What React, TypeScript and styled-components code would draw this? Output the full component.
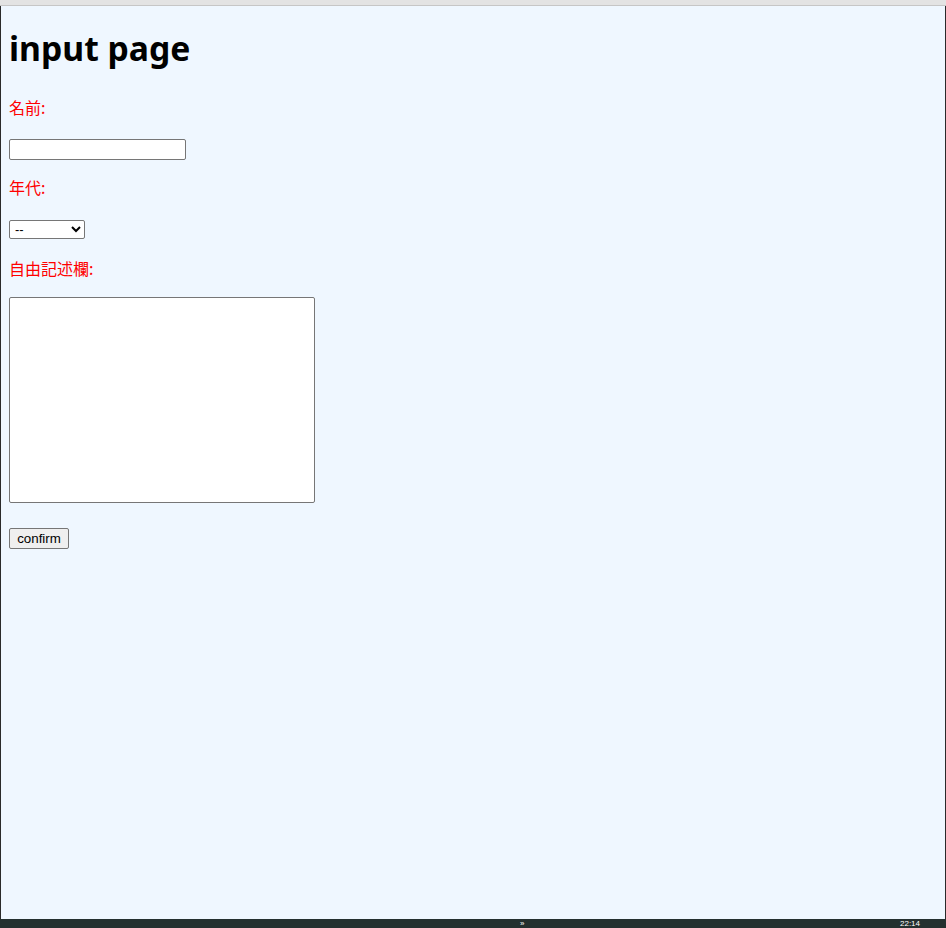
import styled, { createGlobalStyle } from "styled-components"

const GlobalStyle = createGlobalStyle`
  html, body {
    margin: 0;
    padding: 0;
    background: #263235;
  }
  #root {
    width: 946px;
    height: 928px;
  }
`

const Screen = styled.div`
  width: 946px;
  height: 928px;
  display: flex;
  flex-direction: column;
  overflow: hidden;
`

const TopBar = styled.div`
  height: 5px;
  background: #e3e3e3;
  border-bottom: 1px solid #c6c6c6;
  flex-shrink: 0;
`

const Window = styled.div`
  flex: 1;
  background: #eff7ff;
  border-left: 1px solid #2a2a2a;
  border-right: 1px solid #2a2a2a;
  padding: 0 8px;
  display: flex;
  flex-direction: column;
  align-items: flex-start;
`

const Title = styled.h1`
  margin: 22px 0 0;
  height: 40px;
  line-height: 40px;
  font-family: "Noto Sans", "Noto Sans CJK JP", sans-serif;
  font-size: 33.7px;
  font-weight: 700;
  color: #000;
`

const Label = styled.p<{ $top: number }>`
  margin: ${(p) => p.$top}px 0 0;
  height: 20px;
  line-height: 20px;
  font-family: "Noto Sans CJK JP", sans-serif;
  font-size: 16px;
  color: #ff0000;
`

const TextInput = styled.input`
  margin-top: 22px;
  box-sizing: border-box;
  width: 177px;
  height: 21px;
  border: 1px solid #767676;
  border-radius: 2px;
  background: #fff;
  padding: 1px 2px;
`

const Select = styled.select`
  margin-top: 23px;
  box-sizing: border-box;
  width: 76px;
  height: 19px;
  border: 1px solid #767676;
  border-radius: 2px;
  background: #fff;
  font-family: "Liberation Sans", Arial, sans-serif;
  font-size: 13px;
  padding: 0 1px;
  color: #000;
`

const TextArea = styled.textarea`
  margin-top: 19px;
  box-sizing: border-box;
  width: 306px;
  height: 206px;
  border: 1px solid #767676;
  border-radius: 2px;
  background: #fff;
  resize: none;
`

const Button = styled.button`
  margin-top: 25px;
  box-sizing: border-box;
  width: 60px;
  height: 21px;
  padding: 0;
  border: 1px solid #767676;
  border-radius: 2px;
  background: #efefef;
  font-family: "Liberation Sans", Arial, sans-serif;
  font-size: 13.33px;
  color: #000;
`

const Taskbar = styled.div`
  height: 9px;
  flex-shrink: 0;
  background: #24302f;
  position: relative;
  font-family: "Liberation Sans", Arial, sans-serif;
  font-size: 8px;
  color: #fff;
`

const TaskbarGlyph = styled.span<{ $left: number }>`
  position: absolute;
  left: ${(p) => p.$left}px;
  top: 0;
  line-height: 9px;
`

export default function App() {
  return (
    <>
      <GlobalStyle />
      <Screen>
        <TopBar />
        <Window>
          <Title>input page</Title>
          <Label $top={29}>名前:</Label>
          <TextInput type="text" />
          <Label $top={17}>年代:</Label>
          <Select defaultValue="">
            <option value="">--</option>
            <option value="10">10代</option>
            <option value="20">20代</option>
            <option value="30">30代</option>
          </Select>
          <Label $top={19}>自由記述欄:</Label>
          <TextArea />
          <Button type="button">confirm</Button>
        </Window>
        <Taskbar>
          <TaskbarGlyph $left={520}>»</TaskbarGlyph>
          <TaskbarGlyph $left={900}>22:14</TaskbarGlyph>
        </Taskbar>
      </Screen>
    </>
  )
}
